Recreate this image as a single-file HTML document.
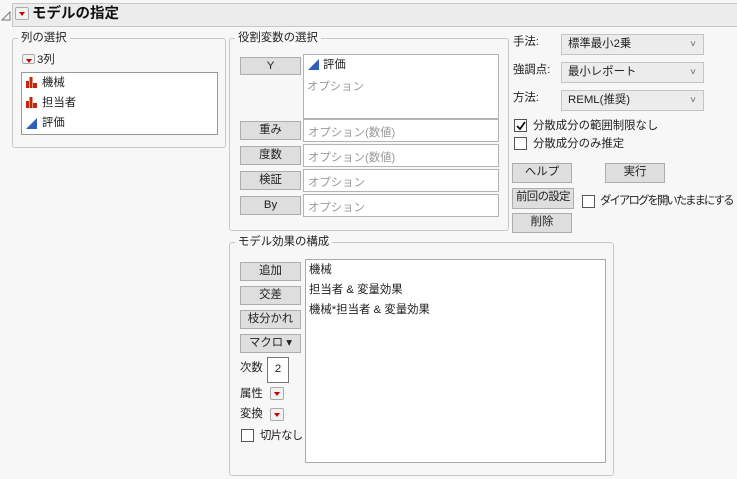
<!DOCTYPE html><html><head><meta charset="utf-8"><style>
*{box-sizing:border-box}
body{margin:0;width:737px;height:479px;background:#f7f7f7;font-family:"Liberation Sans","Noto Sans CJK JP",sans-serif;font-size:11.4px;color:#222;position:relative;overflow:hidden}
.a{position:absolute}
.grp{position:absolute;border:1px solid #c8c8c8;border-radius:3px}
.lbl{position:absolute;background:#f7f7f7;padding:0 3px;top:-9px;left:5px;line-height:16px}
.btn{position:absolute;background:#dedede;border:1px solid #adadad;text-align:center;line-height:17px}
.box{position:absolute;background:#fff;border:1px solid #b4b4b4}
.ph{color:#999;position:absolute;left:4px}
.dd{position:absolute;background:#ececec;border:1px solid #c4c4c4;line-height:19px;padding-left:6px}
.dd:after{content:"˅";position:absolute;right:7px;top:0;color:#666;font-size:10px}
.cb{position:absolute;width:13px;height:13px;background:#fff;border:1px solid #555}
.rb{position:absolute;width:14px;height:13px;border:1px solid #aaa;background:#f2f2f2;border-radius:2px}
.rb:after{content:"";position:absolute;left:3px;top:4px;border-left:3.5px solid transparent;border-right:3.5px solid transparent;border-top:4px solid #c00}
.t{position:absolute;white-space:nowrap;line-height:14px}
</style></head><body>
<svg class="a" style="left:1px;top:11px" width="10" height="10"><path d="M1 9L9 1V9Z" fill="none" stroke="#777"/></svg>
<div class="a" style="left:12px;top:3px;width:725px;height:24px;background:#ececec;border:1px solid #c8c8c8;border-right:none"></div>
<div class="rb" style="left:15px;top:7px"></div>
<div class="t" style="left:32px;top:6px;font-size:14.5px;font-weight:bold;line-height:16px;color:#111">モデルの指定</div>

<div class="grp" style="left:12px;top:38px;width:214px;height:110px"><div class="lbl">列の選択</div></div>
<div class="rb" style="left:22px;top:54px;width:13px;height:10px"></div>
<div class="t" style="left:37px;top:53px">3列</div>
<div class="box" style="left:21px;top:72px;width:197px;height:63px;border-color:#999"></div>
<svg class="a" style="left:26px;top:77px" width="12" height="55"><g fill="#c0280a"><rect x="0" y="4" width="3" height="7"/><rect x="3.5" y="0" width="3" height="11"/><rect x="7" y="6" width="4" height="5"/><rect x="0" y="24" width="3" height="7"/><rect x="3.5" y="20" width="3" height="11"/><rect x="7" y="26" width="4" height="5"/></g><path d="M0 52L11 41V52Z" fill="#2f5fb8"/></svg>
<div class="t" style="left:42px;top:76px">機械</div>
<div class="t" style="left:42px;top:96px">担当者</div>
<div class="t" style="left:42px;top:116px">評価</div>

<div class="grp" style="left:229px;top:38px;width:280px;height:193px"><div class="lbl">役割変数の選択</div></div>
<div class="btn" style="left:240px;top:57px;width:61px;height:18px">Y</div>
<div class="box" style="left:303px;top:54px;width:196px;height:65px"></div>
<svg class="a" style="left:308px;top:59px" width="12" height="12"><path d="M0 11L11 0V11Z" fill="#2f5fb8"/></svg>
<div class="t" style="left:323px;top:58px">評価</div>
<div class="t" style="left:307px;top:80px;color:#999">オプション</div>
<div class="btn" style="left:240px;top:121px;width:61px;height:19px">重み</div>
<div class="box" style="left:303px;top:119px;width:196px;height:23px"><span class="ph" style="top:4px">オプション(数値)</span></div>
<div class="btn" style="left:240px;top:146px;width:61px;height:19px">度数</div>
<div class="box" style="left:303px;top:144px;width:196px;height:23px"><span class="ph" style="top:4px">オプション(数値)</span></div>
<div class="btn" style="left:240px;top:171px;width:61px;height:19px">検証</div>
<div class="box" style="left:303px;top:169px;width:196px;height:23px"><span class="ph" style="top:4px">オプション</span></div>
<div class="btn" style="left:240px;top:196px;width:61px;height:19px">By</div>
<div class="box" style="left:303px;top:194px;width:196px;height:23px"><span class="ph" style="top:4px">オプション</span></div>

<div class="t" style="left:513px;top:35px">手法:</div>
<div class="dd" style="left:561px;top:34px;width:143px;height:21px">標準最小2乗</div>
<div class="t" style="left:513px;top:63px">強調点:</div>
<div class="dd" style="left:561px;top:62px;width:143px;height:21px">最小レポート</div>
<div class="t" style="left:513px;top:91px">方法:</div>
<div class="dd" style="left:561px;top:90px;width:143px;height:21px">REML(推奨)</div>
<div class="cb" style="left:514px;top:119px"></div>
<svg class="a" style="left:515px;top:120px" width="12" height="12"><path d="M2 6L5 9L10 2" fill="none" stroke="#111" stroke-width="1.8"/></svg>
<div class="t" style="left:533px;top:119px">分散成分の範囲制限なし</div>
<div class="cb" style="left:514px;top:137px"></div>
<div class="t" style="left:533px;top:137px">分散成分のみ推定</div>
<div class="btn" style="left:512px;top:163px;width:60px;height:20px">ヘルプ</div>
<div class="btn" style="left:605px;top:163px;width:60px;height:20px">実行</div>
<div class="btn" style="left:512px;top:188px;width:62px;height:21px;letter-spacing:-0.6px">前回の設定</div>
<div class="cb" style="left:582px;top:195px"></div>
<div class="t" style="left:600px;top:194px;letter-spacing:-1.9px">ダイアログを開いたままにする</div>
<div class="btn" style="left:512px;top:213px;width:60px;height:20px">削除</div>

<div class="grp" style="left:229px;top:242px;width:385px;height:234px"><div class="lbl">モデル効果の構成</div></div>
<div class="btn" style="left:240px;top:262px;width:61px;height:19px">追加</div>
<div class="btn" style="left:240px;top:286px;width:61px;height:19px">交差</div>
<div class="btn" style="left:240px;top:310px;width:61px;height:19px">枝分かれ</div>
<div class="btn" style="left:240px;top:334px;width:61px;height:19px">マクロ ▾</div>
<div class="t" style="left:240px;top:361px">次数</div>
<div class="box" style="left:267px;top:357px;width:22px;height:26px;border-color:#777;text-align:center;line-height:22px">2</div>
<div class="t" style="left:240px;top:387px">属性</div>
<div class="rb" style="left:270px;top:387px"></div>
<div class="t" style="left:240px;top:407px">変換</div>
<div class="rb" style="left:270px;top:408px"></div>
<div class="cb" style="left:241px;top:429px"></div>
<div class="t" style="left:260px;top:429px;letter-spacing:-0.8px">切片なし</div>
<div class="box" style="left:305px;top:259px;width:301px;height:204px;border-color:#aaa"></div>
<div class="t" style="left:309px;top:263px">機械</div>
<div class="t" style="left:309px;top:283px">担当者 &amp; 変量効果</div>
<div class="t" style="left:309px;top:303px">機械*担当者 &amp; 変量効果</div>
</body></html>
